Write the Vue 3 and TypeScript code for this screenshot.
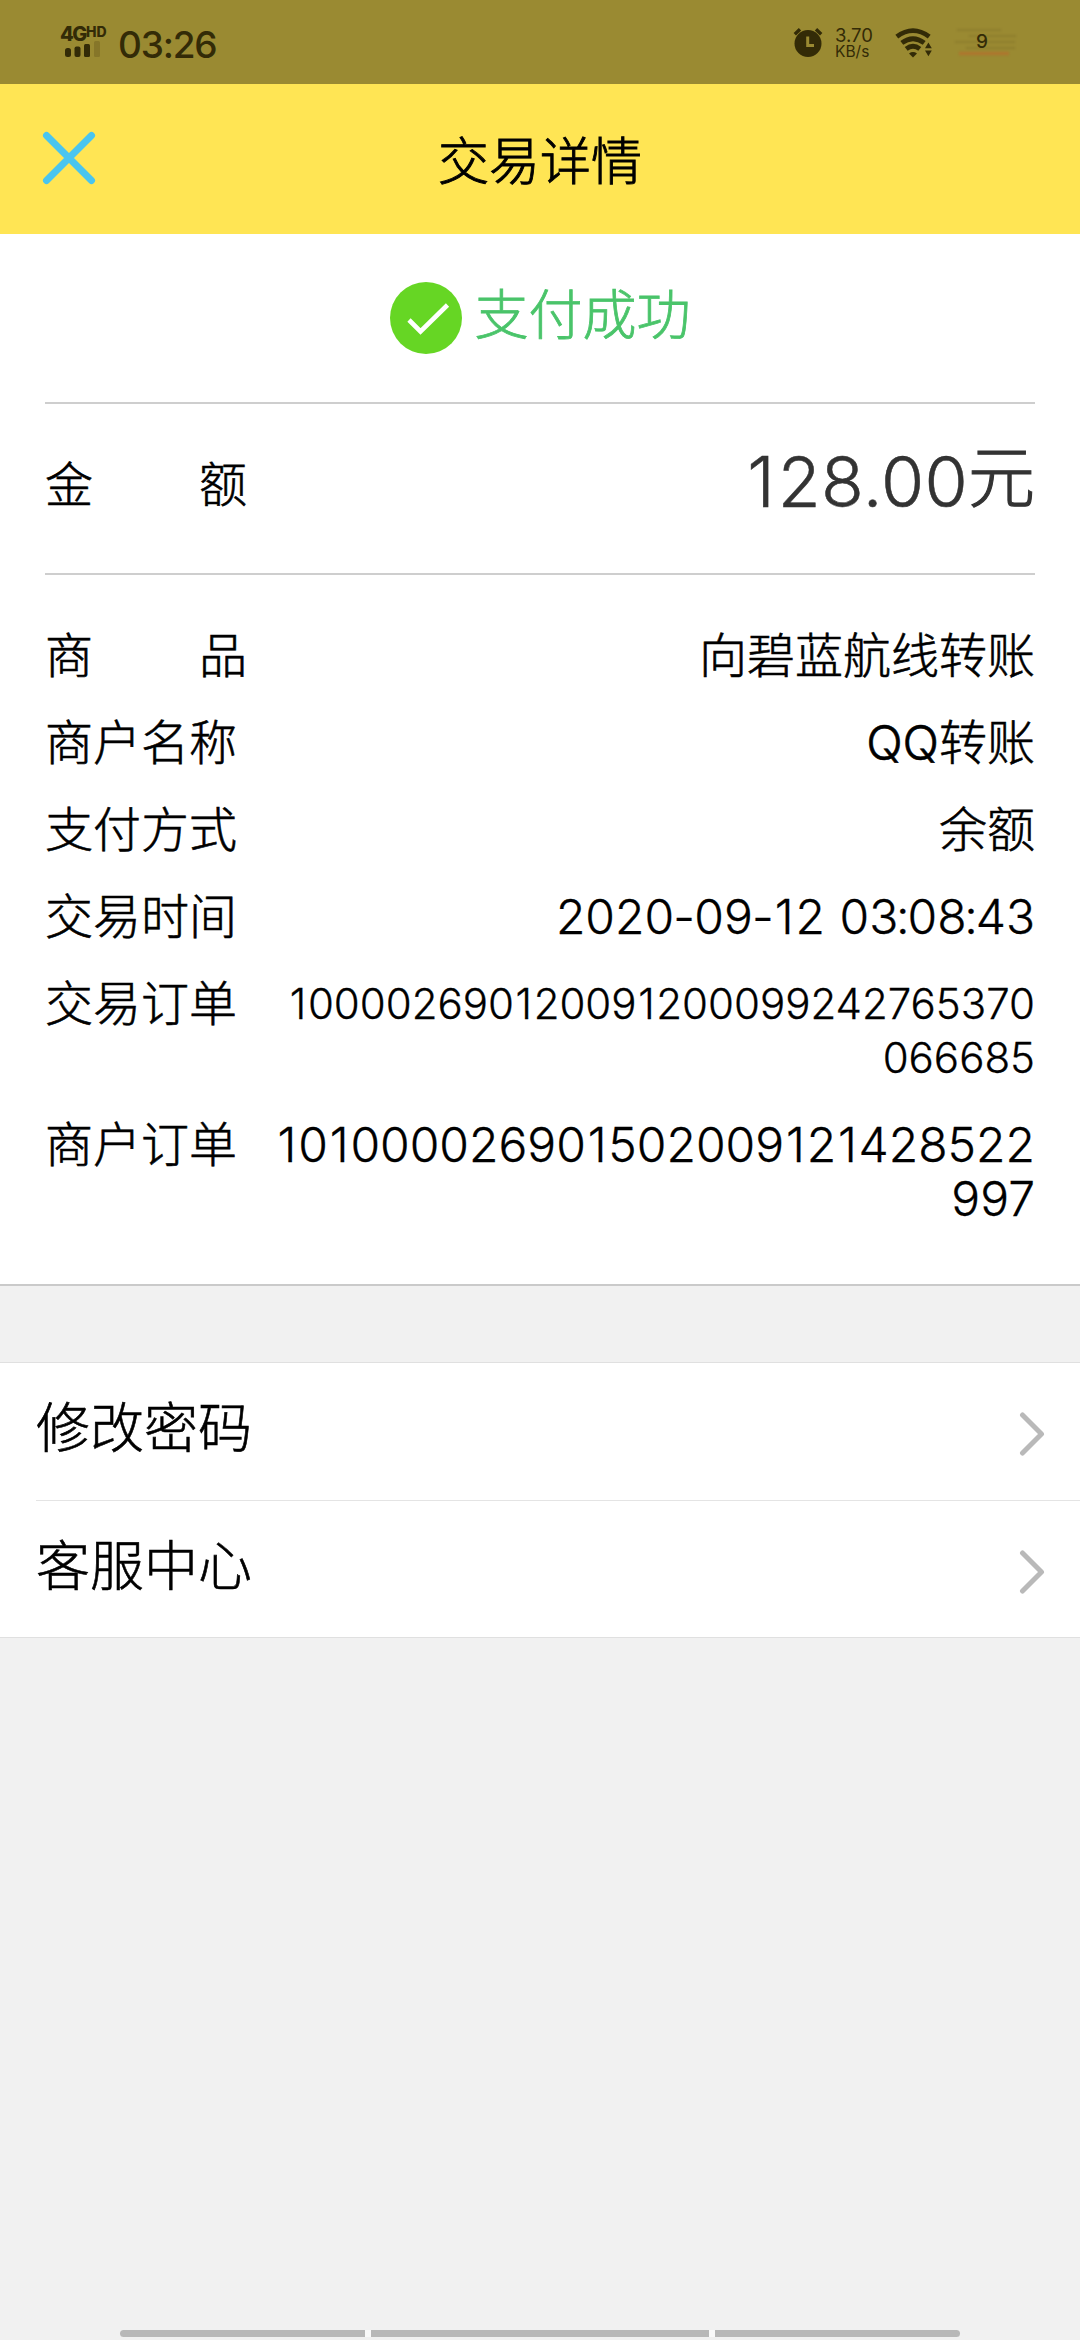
<script setup lang="ts">
interface DetailRow {
  label: string
  value: string
  spread?: boolean
  compact?: boolean
  han?: boolean
}

const rows: DetailRow[] = [
  { label: '商 品', value: '向碧蓝航线转账', spread: true, han: true },
  { label: '商户名称', value: 'QQ转账', han: true },
  { label: '支付方式', value: '余额', han: true },
  { label: '交易时间', value: '2020-09-12 03:08:43' },
  { label: '交易订单', value: '100002690120091200099242765370066685', compact: true },
  { label: '商户订单', value: '101000026901502009121428522997' },
]

const links: string[] = ['修改密码', '客服中心']

const glyphClasses: Record<string, string> = { '1': 'one', '-': 'dash', ':': 'colon' }

// Splits a value at the characters that need their own side bearings.
function pieces(value: string): string[] {
  return value.split(/([1:-])/).filter((part) => part !== '')
}
</script>

<template>
  <div class="screen">
    <div class="status">
      <div class="network">
        <div class="network-type">4G<span class="hd">HD</span></div>
        <svg class="bars" width="36" height="16" viewBox="0 0 36 16">
          <rect x="0" y="7" width="6" height="9" rx="2.5" />
          <rect x="9.5" y="5.5" width="6" height="10.5" rx="2" />
          <rect x="19" y="3" width="6" height="13" rx="1.5" />
          <rect x="29" y="0" width="6" height="16" rx="1.5" fill="#867629" />
        </svg>
      </div>
      <div class="clock">03:26</div>
      <svg class="alarm" width="30" height="32" viewBox="0 0 30 32">
        <circle cx="15" cy="17.5" r="13.5" />
        <path d="M1.8 8.2L7 3.2M28.2 8.2L23 3.2" stroke="#332b07" stroke-width="3.4" />
        <path d="M14.7 10.5V19.5H21" fill="none" stroke="#9a8a32" stroke-width="3" />
      </svg>
      <div class="speed">
        <span class="rate">3.70</span>
        <span class="unit">KB/s</span>
      </div>
      <svg class="wifi" width="38" height="30" viewBox="0 0 38 30">
        <g fill="none" stroke="#332b07" stroke-width="4.8">
          <path d="M1.8 8.6Q18 -3.4 34.2 8.6" />
          <path d="M6.8 14.9Q18 6.5 29.2 14.9" />
          <path d="M11.2 20.8Q18 15.6 24.8 20.8" />
        </g>
        <path d="M14 25.4Q18 22.6 22 25.4L18 29.4Z" />
        <path d="M30 20.3L33.4 14.5L36.8 20.3ZM30 22.5L33.4 28.3L36.8 22.5Z" />
      </svg>
      <div class="battery">
        <svg width="64" height="32" viewBox="0 0 64 32">
          <g fill="none" stroke-width="2" stroke="#87772b" opacity=".6">
            <path d="M2 4H46" />
            <path d="M14 10H61" />
            <path d="M0 16H60" />
            <path d="M11 22H60" />
          </g>
          <path d="M4 27.5H54" stroke="#b5702c" stroke-width="3.6" opacity=".75" />
        </svg>
        <span class="level">9</span>
      </div>
    </div>

    <header class="header">
      <svg class="close" width="54" height="54" viewBox="0 0 54 54">
        <path d="M4.5 4.5L49.5 49.5M49.5 4.5L4.5 49.5" />
      </svg>
      <h1>交易详情</h1>
    </header>

    <main class="panel">
      <div class="result">
        <svg width="72" height="72" viewBox="0 0 72 72">
          <circle cx="36" cy="36" r="36" fill="#66d624" />
          <path d="M19 38L30.5 49.5L57.5 23" fill="none" stroke="#fff" stroke-width="4.6" />
        </svg>
        <span>支付成功</span>
      </div>
      <div class="amount">
        <span class="label spread">金 额</span>
        <span class="money"><span class="one">1</span>28.00<span class="currency">元</span></span>
      </div>
      <div class="details">
        <div v-for="row in rows" :key="row.label" class="row">
          <span class="label" :class="{ spread: row.spread }">{{ row.label }}</span>
          <span class="value" :class="{ compact: row.compact, han: row.han }"><span
            v-for="(part, i) in pieces(row.value)" :key="i" :class="glyphClasses[part]">{{ part }}</span></span>
        </div>
      </div>
    </main>

    <nav class="links">
      <div v-for="link in links" :key="link" class="link">
        <span>{{ link }}</span>
        <svg width="26" height="44" viewBox="0 0 26 44">
          <path d="M3.5 3L22.5 22L3.5 41" />
        </svg>
      </div>
    </nav>

    <div class="gesture">
      <i class="side left"></i>
      <i class="middle"></i>
      <i class="side right"></i>
    </div>
  </div>
</template>

<style>
body {
  background: #f1f1f1;
}
</style>

<style scoped>
.screen {
  display: flex;
  flex-direction: column;
  box-sizing: border-box;
  width: 1080px;
  height: 2340px;
  overflow: hidden;
  background: #f1f1f1;
  color: #000;
  font-family: Inter, "Noto Sans CJK SC", sans-serif;
  font-weight: 300;
}

svg {
  display: block;
  flex: none;
}

.status {
  display: flex;
  box-sizing: border-box;
  height: 84px;
  padding: 26px 0 0 60px;
  background: #9a8a32;
  color: #332b07;
  fill: #332b07;
}

.network {
  width: 58px;
}

.network-type {
  display: flex;
  height: 15px;
  font-size: 20px;
  font-weight: 800;
  line-height: 17px;
  letter-spacing: -1.4px;
}

.hd {
  font-size: 14px;
  line-height: 12px;
  letter-spacing: 0;
}

.bars {
  margin-left: 5px;
}

.clock {
  width: 675px;
  font-size: 37px;
  font-weight: 500;
  line-height: 37px;
  letter-spacing: -1.2px;
}

.alarm {
  margin-right: 12px;
}

.speed {
  display: flex;
  flex-direction: column;
  width: 60px;
  font-weight: 400;
}

.rate {
  font-size: 18.5px;
  line-height: 18px;
}

.unit {
  font-size: 15.5px;
  line-height: 15px;
}

.wifi {
  margin: 2px 22px 0 0;
}

.battery {
  position: relative;
}

.battery svg {
  filter: blur(1px);
}

.level {
  position: absolute;
  top: 5px;
  left: 21px;
  font-size: 19px;
  font-weight: 500;
  line-height: 22px;
}

.header {
  position: relative;
  display: flex;
  align-items: center;
  justify-content: center;
  height: 150px;
  background: #ffe554;
}

.close {
  position: absolute;
  top: 47px;
  left: 42px;
  fill: none;
  stroke: #49c5ef;
  stroke-width: 7;
  stroke-linecap: round;
}

h1 {
  margin: 6px 0 0;
  font-size: 51px;
  font-weight: 300;
  line-height: 60px;
  -webkit-text-stroke: 0.9px #000;
}

.panel {
  box-sizing: border-box;
  height: 1052px;
  padding: 0 45px;
  border-bottom: 2px solid #cacaca;
  background: #fff;
}

.result {
  display: flex;
  align-items: center;
  justify-content: center;
  gap: 13px;
  height: 168px;
  border-bottom: 2px solid #cecece;
  color: #4ac46a;
  font-size: 54px;
}

.result span {
  margin-bottom: 4px;
  line-height: 60px;
  -webkit-text-stroke: 0.8px #4ac46a;
}

.amount {
  display: flex;
  align-items: center;
  justify-content: space-between;
  box-sizing: border-box;
  height: 171px;
  padding-bottom: 7px;
  border-bottom: 2px solid #cecece;
}

.label {
  flex: none;
  font-size: 48px;
  line-height: 54px;
  -webkit-text-stroke: 0.6px #000;
}

.spread {
  word-spacing: 92.5px;
}

.money {
  margin-bottom: 7px;
  color: #333;
  font-size: 70px;
  line-height: 80px;
  letter-spacing: 0.3px;
  -webkit-text-stroke: 0.5px #333;
}

.currency {
  font-size: 67px;
  line-height: 60px;
  letter-spacing: 0;
  vertical-align: 5px;
  -webkit-text-stroke: 1.1px #333;
}

.details {
  display: flex;
  flex-direction: column;
  gap: 33px;
  padding-top: 54px;
}

.row {
  display: flex;
  align-items: flex-start;
  justify-content: space-between;
}

.value {
  max-width: 770px;
  font-size: 48px;
  line-height: 54px;
  text-align: right;
  word-break: break-all;
  word-spacing: 1px;
  -webkit-text-stroke: 0.3px #000;
}

.value.han {
  -webkit-text-stroke-width: 0.6px;
}

.compact {
  max-width: 760px;
  font-size: 42px;
}

.one {
  padding: 0 0.038em;
}

.dash {
  margin: 0 -0.016em;
}

.colon {
  margin: 0 -0.045em;
}

.links {
  margin-top: 76px;
  border-top: 1px solid #e0e0e0;
  border-bottom: 1px solid #e0e0e0;
  background: #fff;
}

.link {
  display: flex;
  align-items: center;
  justify-content: space-between;
  box-sizing: border-box;
  height: 137px;
  margin-left: 36px;
  padding-right: 35px;
  font-size: 54px;
  line-height: 60px;
}

.link span {
  margin-bottom: 5px;
  -webkit-text-stroke: 0.6px #000;
}

.link + .link {
  border-top: 1px solid #e4e4e4;
}

.link svg {
  margin-top: 5px;
  fill: none;
  stroke: #b9b9b9;
  stroke-width: 5;
  stroke-linecap: round;
  stroke-linejoin: round;
}

.gesture {
  display: flex;
  gap: 6px;
  width: 840px;
  height: 7px;
  margin: auto auto 3px;
  background: #fafafa;
  border-radius: 4px;
}

.gesture i {
  background: #b8b8b8;
}

.side {
  width: 245px;
}

.left {
  border-radius: 4px 0 0 4px;
}

.right {
  border-radius: 0 4px 4px 0;
}

.middle {
  flex: 1;
}
</style>
